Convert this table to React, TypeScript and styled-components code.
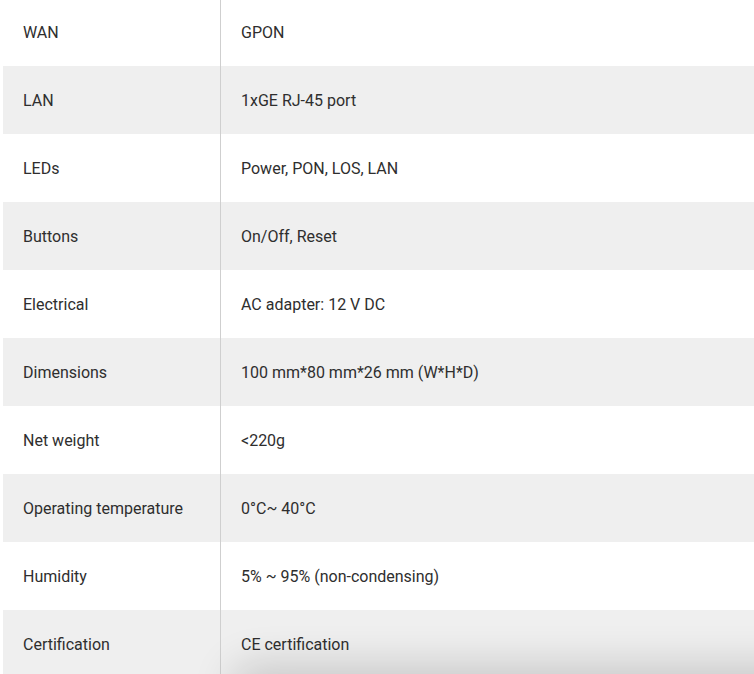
import React from "react";
import styled, { createGlobalStyle } from "styled-components";

const Global = createGlobalStyle`
  html, body { margin: 0; padding: 0; background: #fff; overflow: hidden; }
  body { font-family: Roboto, "Noto Sans", Arial, sans-serif; }
`;

const Page = styled.div`
  position: relative;
  width: 754px;
  height: 674px;
  overflow: hidden;
  padding-left: 3px;
  box-sizing: border-box;
`;

const Table = styled.div`
  margin-top: -2px;
  display: flex;
  flex-direction: column;
`;

const Row = styled.div<{ $alt: boolean }>`
  display: grid;
  grid-template-columns: 218px 1fr;
  height: 68px;
  background: ${(p) => (p.$alt ? "#efefef" : "#ffffff")};
`;

const Cell = styled.div<{ $label?: boolean }>`
  display: flex;
  align-items: center;
  padding-left: 20px;
  font-size: 16px;
  color: #2e2e2e;
  border-right: ${(p) => (p.$label ? "1px solid #cfcfcf" : "none")};
  white-space: nowrap;
`;

const BottomShadow = styled.div`
  position: absolute;
  left: 240px;
  right: -60px;
  bottom: -30px;
  height: 30px;
  box-shadow: 0 0 40px 10px rgba(0, 0, 0, 0.16);
  border-radius: 40px;
  pointer-events: none;
`;

const rows: [string, string][] = [
  ["WAN", "GPON"],
  ["LAN", "1xGE RJ-45 port"],
  ["LEDs", "Power, PON, LOS, LAN"],
  ["Buttons", "On/Off, Reset"],
  ["Electrical", "AC adapter: 12 V DC"],
  ["Dimensions", "100 mm*80 mm*26 mm (W*H*D)"],
  ["Net weight", "<220g"],
  ["Operating temperature", "0°C~ 40°C"],
  ["Humidity", "5% ~ 95% (non-condensing)"],
  ["Certification", "CE certification"],
];

export default function App() {
  return (
    <>
      <Global />
      <Page>
        <Table>
          {rows.map(([k, v], i) => (
            <Row key={k} $alt={i % 2 === 1}>
              <Cell $label>{k}</Cell>
              <Cell>{v}</Cell>
            </Row>
          ))}
        </Table>
        <BottomShadow />
      </Page>
    </>
  );
}
